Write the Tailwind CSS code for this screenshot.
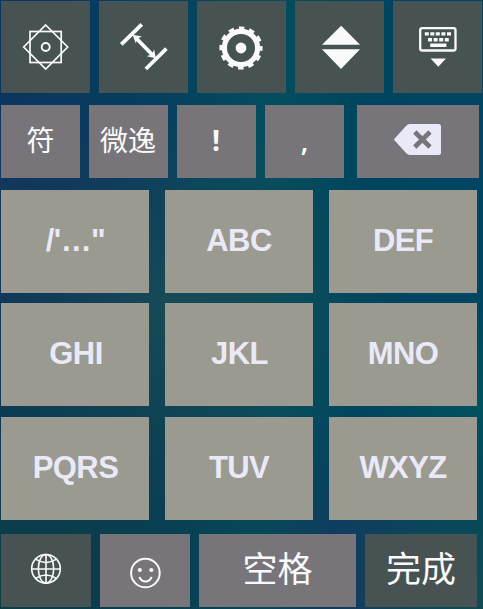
<!DOCTYPE html>
<html lang="zh-CN">
<head>
<meta charset="utf-8">
<title>Keyboard</title>
<script src="https://cdn.jsdelivr.net/npm/@tailwindcss/browser@4"></script>
</head>
<body class="w-[483px] h-[609px] overflow-hidden bg-[#074560] bg-[radial-gradient(circle_at_0%_100%,#0c3f45_0%,transparent_45%),radial-gradient(circle_at_100%_100%,#124b52_0%,transparent_22%),radial-gradient(ellipse_at_0%_35%,#15365c_0%,transparent_28%),radial-gradient(ellipse_at_72%_100%,#173761_0%,transparent_24%),radial-gradient(ellipse_at_100%_66%,#00525e_0%,transparent_18%),radial-gradient(ellipse_at_36%_52%,#194b56_0%,transparent_48%),linear-gradient(90deg,#07365f_0%,#06405f_35%,#034e5e_56%,#00455f_75%,#004663_100%)] font-['Liberation_Sans','Noto_Sans_CJK_SC',sans-serif] text-[#fafafa]">
<main class="flex flex-col pt-px pl-px">
  <div class="flex gap-[9px] h-[92px]">
    <button class="w-[89px] bg-[#475353]">
      <svg class="block w-full h-full" viewBox="1 1 89 92" fill="none" stroke="#fafafa" stroke-width="1.7"><rect x="30" y="31.5" width="31.2" height="31"/><path d="M45.7 25L67.7 47 45.7 69 23.7 47Z"/><circle cx="45.7" cy="47" r="4" stroke-width="1.9"/></svg>
    </button>
    <button class="w-[89px] bg-[#475353]">
      <svg class="block w-full h-full" viewBox="99 1 89 92" fill="none" stroke="#fafafa" stroke-width="3.8"><path d="M121.3 44.3L141.8 24.3M145.8 69L166.4 48.7M135.5 37.5L153 55.5"/><path d="M132.5 34.8L142 36.5 137.5 38.5 135.8 43.3ZM155.8 58.2L146.7 56.3 151.7 54.3 154.2 49.5Z" fill="#fafafa" stroke="none"/></svg>
    </button>
    <button class="w-[89px] bg-[#475353]">
      <svg class="block w-full h-full" viewBox="197 1 89 92" fill="none" stroke="#fafafa"><circle cx="241" cy="48" r="16.6" stroke-width="5.2"/><circle cx="241" cy="48" r="19.9" stroke-width="3.4" stroke-dasharray="5.6 4.82" stroke-dashoffset="2.8"/><circle cx="241" cy="48" r="5.4" fill="#fafafa" stroke="none"/></svg>
    </button>
    <button class="w-[89px] bg-[#475353]">
      <svg class="block w-full h-full" viewBox="295 1 89 92" fill="#fafafa"><path d="M341.2 25.8L360 44.8H322ZM322 49.2H360L341 69Z"/></svg>
    </button>
    <button class="w-[89px] bg-[#475353]">
      <svg class="block w-full h-full" viewBox="393 1 89 92" fill="#fafafa"><rect x="420.2" y="28.2" width="35.3" height="22.3" rx="2" fill="none" stroke="#fafafa" stroke-width="2.3"/><path d="M424.8 32.2h4v3.4h-4zM430.3 32.2h4v3.4h-4zM435.8 32.2h4v3.4h-4zM441.4 32.2h4v3.4h-4zM447 32.2h4v3.4h-4zM428 38h4v3.4h-4zM433.6 38h4v3.4h-4zM439.2 38h4v3.4h-4zM444.8 38h4v3.4h-4zM430.2 43.5h16.2v3.4h-16.2zM430.6 58.5H446L438.3 66.7Z"/></svg>
    </button>
  </div>
  <div class="mt-3 flex gap-[9px] h-[73px] text-[28px] leading-none">
    <button class="w-[79px] bg-[#777579]">符</button>
    <button class="w-[79px] bg-[#777579] pr-px">微逸</button>
    <button class="w-[79px] bg-[#777579] font-['Open_Sans',sans-serif] font-bold pb-[3px] pr-px">!</button>
    <button class="w-[79px] bg-[#777579] font-['Open_Sans',sans-serif] font-semibold pb-[3px]">,</button>
    <button class="ml-[4px] w-[122px] bg-[#777579]">
      <svg class="block w-full h-full" viewBox="357 105 122 73"><path d="M410 124H438.5Q441 124 441 126.5V152.5Q441 155 438.5 155H410Q408 155 406 153L393.8 139.5 406 126Q408 124 410 124Z" fill="#eae9f8"/><path d="M414.8 132L430 147M430 132L414.8 147" stroke="#777579" stroke-width="4.6"/></svg>
    </button>
  </div>
  <div class="mt-3 flex flex-col text-[31px] tracking-[-0.6px] font-bold leading-none text-[#eae9f8]">
    <div class="flex gap-4 h-[103px]">
      <button class="w-[148px] pb-[2px] pl-px bg-[#9a9a90]">/'…"</button>
      <button class="w-[148px] pb-[2px] bg-[#9a9a90]">ABC</button>
      <button class="w-[148px] pb-[2px] bg-[#9a9a90]">DEF</button>
    </div>
    <div class="mt-[10px] flex gap-4 h-[103px]">
      <button class="w-[148px] pb-[2px] pl-[2px] bg-[#9a9a90]">GHI</button>
      <button class="w-[148px] pb-[2px] pl-px bg-[#9a9a90]">JKL</button>
      <button class="w-[148px] pb-[2px] bg-[#9a9a90]">MNO</button>
    </div>
    <div class="mt-[11px] flex gap-4 h-[103px]">
      <button class="w-[148px] pb-[2px] pl-px bg-[#9a9a90]">PQRS</button>
      <button class="w-[148px] pb-[2px] bg-[#9a9a90]">TUV</button>
      <button class="w-[148px] pb-[2px] bg-[#9a9a90]">WXYZ</button>
    </div>
  </div>
  <div class="mt-[14px] flex gap-[9px] h-[73px] text-[35px] leading-none">
    <button class="w-[90px] bg-[#475353]">
      <svg class="block w-full h-full" viewBox="1 534 90 73" fill="none" stroke="#fafafa" stroke-width="1.6"><circle cx="46" cy="568.8" r="14.3"/><ellipse cx="46" cy="568.8" rx="7.7" ry="14.3"/><path d="M46 554.5V583M31.7 569H60.3M35.5 559.2Q46 566 56.5 559.2M35.5 578.5Q46 571.5 56.5 578.5"/></svg>
    </button>
    <button class="w-[90px] bg-[#777579]">
      <svg class="block w-full h-full" viewBox="100 534 90 73" fill="none" stroke="#fafafa" stroke-width="2"><circle cx="145.4" cy="573" r="14.3"/><path d="M139.3 577Q141.5 581.5 145.5 581.5T151.7 577"/><g fill="#fafafa" stroke="none"><circle cx="139.8" cy="570" r="2.1"/><circle cx="151.3" cy="570" r="2.1"/></g></svg>
    </button>
    <button class="w-[157px] pb-[2px] bg-[#777579]">空格</button>
    <button class="w-[112px] pb-[2px] bg-[#475353]">完成</button>
  </div>
</main>
</body>
</html>
